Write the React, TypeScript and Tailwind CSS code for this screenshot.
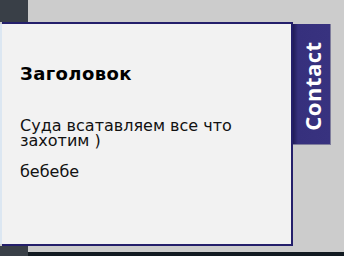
export default function App() {
  return (
    <div className="w-[344px] h-[256px] bg-[#cccccc] flex flex-col overflow-hidden">
      <div className="h-[22px] flex shrink-0">
        <div className="w-[28px] bg-[#393f47]" />
      </div>
      <div className="h-[224px] flex shrink-0">
        <div className="w-[2px] bg-[#dce7f2] mt-[2px] mb-[2px]" />
        <div className="w-[291px] bg-[#f2f2f2] border-t-2 border-r-2 border-b-2 border-[#241f6b] pl-[18px] pr-[14px] pt-[39px] text-black" style={{ fontFamily: '"DejaVu Sans", Verdana, sans-serif' }}>
          <h2 className="text-[18px] font-bold leading-[22px] tracking-[0.4px] m-0">Заголовок</h2>
          <p className="text-[16px] leading-[15px] mt-[33px] text-[#111]">Суда всатавляем все что захотим )</p>
          <p className="text-[16px] leading-[15px] mt-[16px] text-[#111]">бебебе</p>
        </div>
        <div className="mt-[2px] w-[38px] h-[121px] pt-[4px] bg-[linear-gradient(to_right,#211c58,#36307d_5px,#38327f)] border-r border-b border-[#7f7d9c] flex items-center justify-center">
          <span className="block -rotate-90 whitespace-nowrap text-white text-[22px] tracking-[0.5px] font-bold leading-none" style={{ fontFamily: '"Open Sans", sans-serif' }}>Contact</span>
        </div>
      </div>
      <div className="h-[10px] flex shrink-0">
        <div className="w-[28px] bg-[#393f47]" />
        <div className="flex-1 flex flex-col">
          <div className="h-[6px]" />
          <div className="flex-1 bg-[#121a21]" />
        </div>
      </div>
    </div>
  );
}
